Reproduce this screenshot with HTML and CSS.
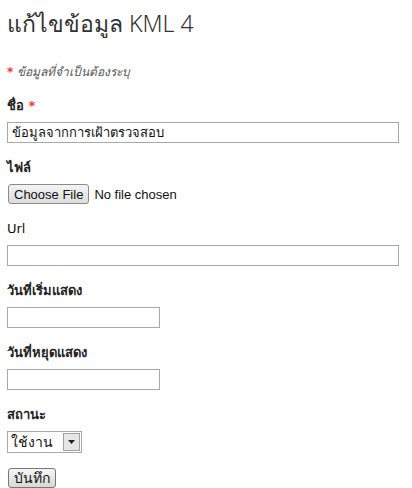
FILE: index.html
```html
<!DOCTYPE html>
<html lang="th">
<head>
<meta charset="utf-8">
<title>แก้ไขข้อมูล KML 4</title>
<link rel="stylesheet" href="styles.css">
</head>
<body>
<div class="page">
  <h1 class="title">แก้ไขข้อมูล KML 4</h1>
  <p class="note"><span class="req">*</span> ข้อมูลที่จำเป็นต้องระบุ</p>
  <form class="form">
    <div class="field">
      <label class="label">ชื่อ <span class="req">*</span></label>
      <input class="text wide" type="text" value="ข้อมูลจากการเฝ้าตรวจสอบ">
    </div>
    <div class="field">
      <label class="label">ไฟล์</label>
      <input class="file" type="file">
    </div>
    <div class="field">
      <label class="label latin">Url</label>
      <input class="text wide" type="text">
    </div>
    <div class="field">
      <label class="label">วันที่เริ่มแสดง</label>
      <input class="text short" type="text">
    </div>
    <div class="field">
      <label class="label">วันที่หยุดแสดง</label>
      <input class="text short" type="text">
    </div>
    <div class="field">
      <label class="label">สถานะ</label>
      <select class="select">
        <option>ใช้งาน</option>
        <option>ไม่ใช้งาน</option>
      </select>
    </div>
    <div class="actions">
      <button class="btn" type="button">บันทึก</button>
    </div>
  </form>
</div>
</body>
</html>
```
FILE: styles.css
```css
html, body {
  margin: 0;
  padding: 0;
  background: #fff;
}
body {
  font-family: Tahoma, "DejaVu Sans", "Noto Sans", sans-serif;
  font-size: 13px;
  color: #222;
}
.page {
  padding: 0 7px;
}
.title {
  margin: 0;
  padding-top: 6px;
  font-family: "Noto Sans", "Open Sans", sans-serif;
  font-weight: 300;
  font-size: 23px;
  line-height: 34px;
  color: #333;
}
.note {
  margin: 24px 0 0;
  font-style: italic;
  font-size: 12px;
  line-height: 16px;
  color: #555;
}
.req {
  color: #e33;
  font-style: normal;
  font-weight: bold;
}
.form {
  margin-top: 18px;
}
.field {
  display: flex;
  flex-direction: column;
  align-items: flex-start;
  margin-bottom: 17px;
}
.label {
  font-weight: bold;
  font-size: 13px;
  line-height: 16px;
  margin-bottom: 8px;
  color: #222;
}
.label.latin {
  font-weight: normal;
  font-size: 13px;
  color: #111;
}
.text {
  box-sizing: border-box;
  height: 21px;
  margin: 0;
  padding: 1px 4px;
  border: 1px solid #a9a9a9;
  font-family: Tahoma, "DejaVu Sans", sans-serif;
  font-size: 13px;
  color: #111;
  background: #fff;
  outline: none;
}
.wide {
  width: 392px;
}
.short {
  width: 153px;
}
.file {
  margin: 0 0 0 1px;
  font-family: Arial, "Liberation Sans", sans-serif;
  font-size: 13px;
  color: #111;
  height: 20px;
}
.file::file-selector-button {
  height: 20px;
  margin-right: 5px;
  padding: 0 5px;
  border: 1px solid #8a8a8a;
  border-radius: 3px;
  background: linear-gradient(#f4f4f4, #dcdcdc);
  font-family: Arial, "Liberation Sans", sans-serif;
  font-size: 13px;
  color: #111;
}
.select {
  box-sizing: border-box;
  width: 75px;
  height: 22px;
  margin: 0;
  padding: 0 20px 0 3px;
  border: 1px solid #a9a9a9;
  -webkit-appearance: none;
  appearance: none;
  border-radius: 0;
  font-family: Tahoma, "DejaVu Sans", sans-serif;
  font-size: 14px;
  color: #111;
  background-color: #fff;
  background-image: url("data:image/svg+xml;utf8,<svg xmlns='http://www.w3.org/2000/svg' width='17' height='18'><rect x='0.5' y='0.5' width='16' height='17' fill='%23e6e6e6' stroke='%23a0a0a0'/><path d='M5 7h7l-3.5 4z' fill='%23222'/></svg>");
  background-repeat: no-repeat;
  background-position: right 1px center;
}
.actions {
  margin-top: -2px;
}
.btn {
  height: 20px;
  margin: 0 0 0 1px;
  padding: 0 5px;
  border: 1px solid #777;
  border-radius: 3px;
  background: linear-gradient(#f6f6f6, #d8d8d8);
  font-family: Tahoma, "DejaVu Sans", sans-serif;
  font-size: 14px;
  line-height: 18px;
  color: #111;
}
```
